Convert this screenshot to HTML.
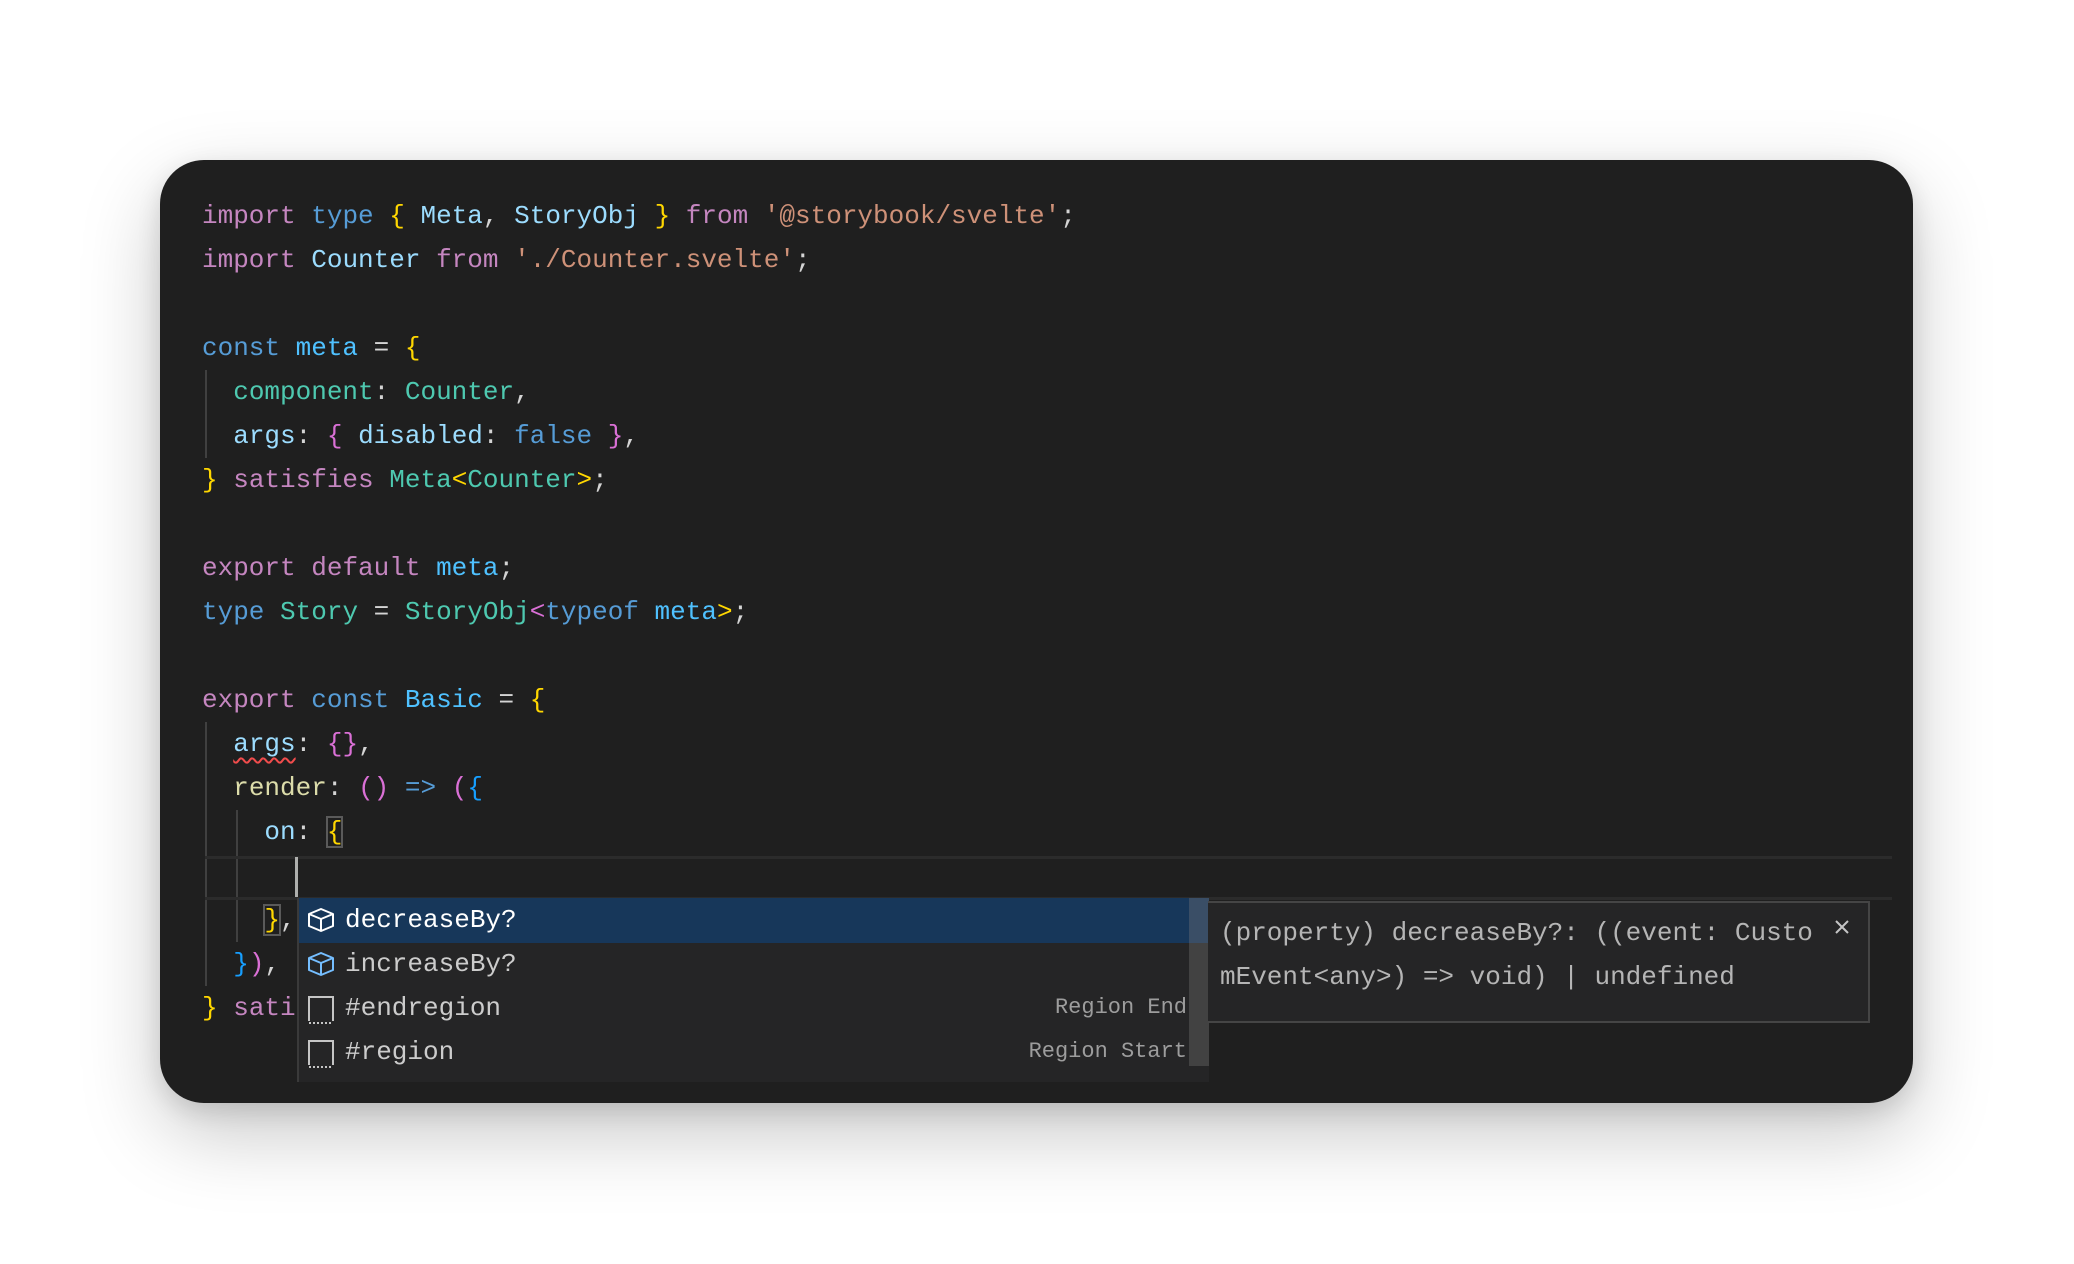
<!DOCTYPE html>
<html><head><meta charset="utf-8">
<style>
html,body{margin:0;padding:0;background:#fff;width:2074px;height:1264px;overflow:hidden;}
.card{position:absolute;left:160px;top:160px;width:1753px;height:943px;background:#1f1f1f;border-radius:44px;box-shadow:0 30px 80px rgba(0,0,0,0.22),0 8px 24px rgba(0,0,0,0.12);}
.code{position:absolute;left:0;top:0;font-family:"Liberation Mono",monospace;font-size:26px;}
.ln{position:absolute;left:202px;height:44px;line-height:44px;white-space:pre;color:#d4d4d4;}
.k{color:#c586c0}.b{color:#569cd6}.v{color:#9cdcfe}.s{color:#ce9178}.y{color:#ffd700}.t{color:#4ec9b0}.c{color:#4fc1ff}.p{color:#da70d6}.bl{color:#179fff}.f{color:#dcdcaa}
.guide{position:absolute;width:2px;background:#404040;}
</style></head><body>
<div class="card"></div>
<div class="code">
<div class="ln" style="top:194px"><span class="k">import</span> <span class="b">type</span> <span class="y">{</span> <span class="v">Meta</span>, <span class="v">StoryObj</span> <span class="y">}</span> <span class="k">from</span> <span class="s">'@storybook/svelte'</span>;</div>
<div class="ln" style="top:238px"><span class="k">import</span> <span class="v">Counter</span> <span class="k">from</span> <span class="s">'./Counter.svelte'</span>;</div>
<div class="ln" style="top:326px"><span class="b">const</span> <span class="c">meta</span> = <span class="y">{</span></div>
<div class="ln" style="top:370px">  <span class="t">component</span>: <span class="t">Counter</span>,</div>
<div class="ln" style="top:414px">  <span class="v">args</span>: <span class="p">{</span> <span class="v">disabled</span>: <span class="b">false</span> <span class="p">}</span>,</div>
<div class="ln" style="top:458px"><span class="y">}</span> <span class="k">satisfies</span> <span class="t">Meta</span><span class="y">&lt;</span><span class="t">Counter</span><span class="y">&gt;</span>;</div>
<div class="ln" style="top:546px"><span class="k">export</span> <span class="k">default</span> <span class="c">meta</span>;</div>
<div class="ln" style="top:590px"><span class="b">type</span> <span class="t">Story</span> = <span class="t">StoryObj</span><span class="p">&lt;</span><span class="b">typeof</span> <span class="c">meta</span><span class="y">&gt;</span>;</div>
<div class="ln" style="top:678px"><span class="k">export</span> <span class="b">const</span> <span class="c">Basic</span> = <span class="y">{</span></div>
<div class="ln" style="top:722px">  <span class="v" style="text-decoration:underline wavy #f14c4c;text-underline-offset:6px;text-decoration-thickness:2px">args</span>: <span class="p">{}</span>,</div>
<div class="ln" style="top:766px">  <span class="f">render</span>: <span class="p">()</span> <span class="b">=&gt;</span> <span class="p">(</span><span class="bl">{</span></div>
<div class="ln" style="top:810px">    <span class="v">on</span>: <span class="y" style="outline:2px solid #5a5a5a;outline-offset:-1px">{</span></div>
<div class="ln" style="top:898px">    <span class="y" style="outline:2px solid #5a5a5a;outline-offset:-1px">}</span>,</div>
<div class="ln" style="top:942px">  <span class="bl">}</span><span class="p">)</span>,</div>
<div class="ln" style="top:986px"><span class="y">}</span> <span class="k">sati</span></div>
</div>
<!-- guides -->
<div class="guide" style="left:205px;top:370px;height:88px"></div>
<div class="guide" style="left:205px;top:722px;height:264px"></div>
<div class="guide" style="left:236px;top:810px;height:132px"></div>
<!-- current line -->
<div style="position:absolute;left:205px;top:856px;width:1687px;height:38px;border-top:3px solid #2b2b2b;border-bottom:3px solid #2b2b2b"></div>
<div style="position:absolute;left:295px;top:857px;width:3px;height:40px;background:#aeafad"></div>
<!-- suggest -->
<div style="position:absolute;left:297px;top:898px;width:910px;height:184px;background:#252526;border-left:2px solid #3a3a3a;font-family:'Liberation Mono',monospace;font-size:26px;color:#cccccc">
 <div style="position:absolute;left:0;top:0;width:890px;height:45px;background:#17375a"></div>
 <div style="position:absolute;right:0;top:0;width:20px;height:168px;background:#424242"></div>
 <div style="position:absolute;right:0;top:0;width:20px;height:45px;background:#3a4e66"></div>
 <svg style="position:absolute;left:8px;top:9px" width="28" height="26" viewBox="0 0 28 26"><path d="M14 2 L26 7 L26 19 L14 24 L2 19 L2 7 Z M2 7 L14 12 L26 7 M14 12 L14 24" fill="none" stroke="#ffffff" stroke-width="2" stroke-linejoin="round"/></svg>
 <svg style="position:absolute;left:8px;top:53px" width="28" height="26" viewBox="0 0 28 26"><path d="M14 2 L26 7 L26 19 L14 24 L2 19 L2 7 Z M2 7 L14 12 L26 7 M14 12 L14 24" fill="none" stroke="#75beff" stroke-width="2" stroke-linejoin="round"/></svg>
 <svg style="position:absolute;left:9px;top:98px" width="26" height="28" viewBox="0 0 26 28"><path d="M1 25 L1 1 L25 1 L25 25" fill="none" stroke="#c5c5c5" stroke-width="2"/><path d="M1 27 L25 27" stroke="#c5c5c5" stroke-width="2" stroke-dasharray="2 2"/></svg>
 <svg style="position:absolute;left:9px;top:142px" width="26" height="28" viewBox="0 0 26 28"><path d="M1 25 L1 1 L25 1 L25 25" fill="none" stroke="#c5c5c5" stroke-width="2"/><path d="M1 27 L25 27" stroke="#c5c5c5" stroke-width="2" stroke-dasharray="2 2"/></svg>
 <div style="position:absolute;left:46px;top:0;line-height:44px;color:#fff">decreaseBy?</div>
 <div style="position:absolute;left:46px;top:44px;line-height:44px">increaseBy?</div>
 <div style="position:absolute;left:46px;top:88px;line-height:44px">#endregion</div>
 <div style="position:absolute;left:46px;top:132px;line-height:44px">#region</div>
 <div style="position:absolute;right:22px;top:88px;line-height:44px;font-size:22px;color:#9d9d9d">Region End</div>
 <div style="position:absolute;right:22px;top:132px;line-height:44px;font-size:22px;color:#9d9d9d">Region Start</div>
</div>
<!-- hover doc -->
<div style="position:absolute;left:1208px;top:901px;width:660px;height:118px;background:#252526;border:2px solid #454545;border-left:none;font-family:'Liberation Mono',monospace;font-size:26px;color:#b5b5b5">
 <div style="position:absolute;left:12px;top:8px;line-height:44px;white-space:pre">(property) decreaseBy?: ((event: Custo</div>
 <div style="position:absolute;left:12px;top:52px;line-height:44px;white-space:pre">mEvent&lt;any&gt;) =&gt; void) | undefined</div>
 <svg style="position:absolute;left:626px;top:16px" width="16" height="16" viewBox="0 0 16 16"><path d="M2 2 L14 14 M14 2 L2 14" stroke="#c5c5c5" stroke-width="2"/></svg>
</div>
</body></html>
